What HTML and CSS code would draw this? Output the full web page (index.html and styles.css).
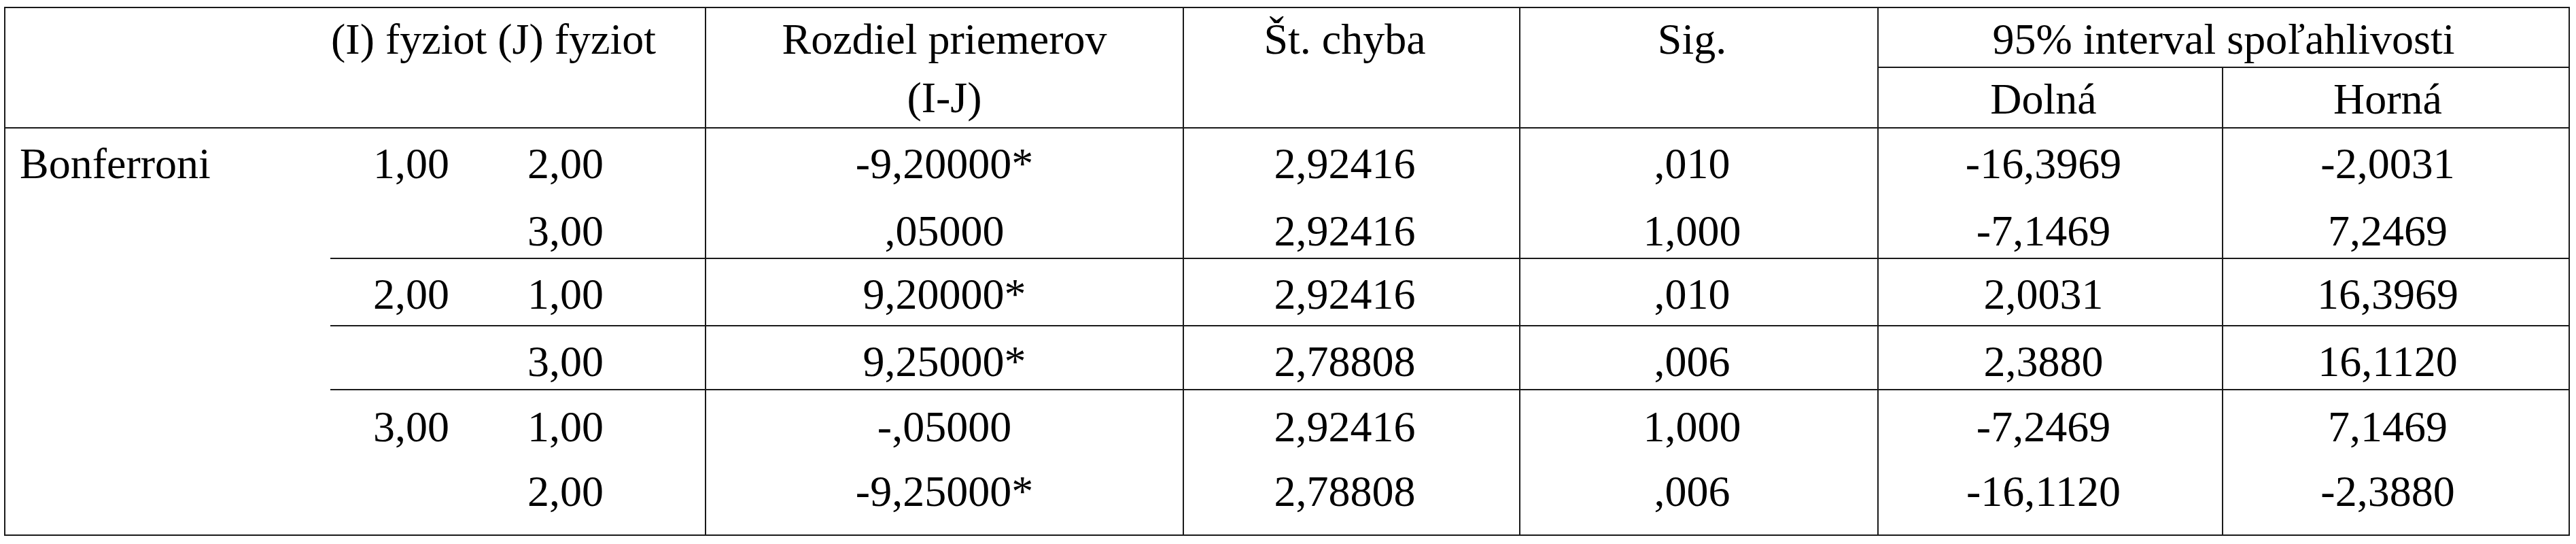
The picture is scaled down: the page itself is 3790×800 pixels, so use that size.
FILE: index.html
```html
<!DOCTYPE html>
<html lang="sk">
<head>
<meta charset="utf-8">
<title>Bonferroni</title>
<link rel="stylesheet" href="styles.css">
</head>
<body>
<table class="stat">
  <colgroup>
    <col class="c-test">
    <col class="c-i">
    <col class="c-j">
    <col class="c-diff">
    <col class="c-se">
    <col class="c-sig">
    <col class="c-lo">
    <col class="c-hi">
  </colgroup>
  <thead>
    <tr class="h1">
      <td class="hd single" rowspan="2"></td>
      <td class="hd single ij" colspan="2" rowspan="2">(I) fyziot (J) fyziot</td>
      <td class="hd double vl" rowspan="2">Rozdiel priemerov<br>(I-J)</td>
      <td class="hd single vl shift" rowspan="2">Št. chyba</td>
      <td class="hd single vl shift" rowspan="2">Sig.</td>
      <td class="hd ci vl" colspan="2">95% interval spoľahlivosti</td>
    </tr>
    <tr class="h2">
      <td class="hd sub vl shift">Dolná</td>
      <td class="hd sub vl shift-hi">Horná</td>
    </tr>
  </thead>
  <tbody>
    <tr class="r1">
      <td class="test" rowspan="6">Bonferroni</td>
      <td class="i">1,00</td>
      <td class="j">2,00</td>
      <td class="num vl">-9,20000*</td>
      <td class="num vl shift">2,92416</td>
      <td class="num vl shift">,010</td>
      <td class="num vl shift">-16,3969</td>
      <td class="num vl shift-hi">-2,0031</td>
    </tr>
    <tr class="r2">
      <td class="i"></td>
      <td class="j">3,00</td>
      <td class="num vl">,05000</td>
      <td class="num vl shift">2,92416</td>
      <td class="num vl shift">1,000</td>
      <td class="num vl shift">-7,1469</td>
      <td class="num vl shift-hi">7,2469</td>
    </tr>
    <tr class="r3 sep">
      <td class="i">2,00</td>
      <td class="j">1,00</td>
      <td class="num vl">9,20000*</td>
      <td class="num vl shift">2,92416</td>
      <td class="num vl shift">,010</td>
      <td class="num vl shift">2,0031</td>
      <td class="num vl shift-hi">16,3969</td>
    </tr>
    <tr class="r4 sep">
      <td class="i"></td>
      <td class="j">3,00</td>
      <td class="num vl">9,25000*</td>
      <td class="num vl shift">2,78808</td>
      <td class="num vl shift">,006</td>
      <td class="num vl shift">2,3880</td>
      <td class="num vl shift-hi">16,1120</td>
    </tr>
    <tr class="r5 sep">
      <td class="i">3,00</td>
      <td class="j">1,00</td>
      <td class="num vl">-,05000</td>
      <td class="num vl shift">2,92416</td>
      <td class="num vl shift">1,000</td>
      <td class="num vl shift">-7,2469</td>
      <td class="num vl shift-hi">7,1469</td>
    </tr>
    <tr class="r6">
      <td class="i"></td>
      <td class="j">2,00</td>
      <td class="num vl">-9,25000*</td>
      <td class="num vl shift">2,78808</td>
      <td class="num vl shift">,006</td>
      <td class="num vl shift">-16,1120</td>
      <td class="num vl shift-hi">-2,3880</td>
    </tr>
  </tbody>
</table>
</body>
</html>
```
FILE: styles.css
```css
html, body {
  margin: 0;
  padding: 0;
  background: #ffffff;
}

body {
  padding: 10px 0 0 6px;
}

.stat {
  border-collapse: collapse;
  table-layout: fixed;
  width: 3775px;
  border: 2px solid #1a1a1a;
  font-family: "Liberation Serif", "Times New Roman", serif;
  font-size: 64px;
  color: #000000;
}

.c-test { width: 479px; }
.c-i    { width: 238px; }
.c-j    { width: 314px; }
.c-diff { width: 703px; }
.c-se   { width: 495px; }
.c-sig  { width: 527px; }
.c-lo   { width: 507px; }
.c-hi   { width: 510px; }

.stat td {
  padding: 0;
  vertical-align: top;
  text-align: center;
  white-space: nowrap;
  overflow: visible;
}

.stat .vl {
  border-left: 2px solid #1a1a1a;
}

.stat .shift { padding-right: 20px; }
.stat .shift-hi { padding-right: 24px; }

/* header */
.stat .hd {
  border-bottom: 2px solid #1a1a1a;
}

.stat .hd.single {
  padding-top: 6px;
  line-height: 80px;
}

.stat .hd.double {
  padding-top: 3px;
  line-height: 86px;
}

.stat .hd.ij {
  text-align: left;
  padding-left: 1px;
}

.stat .hd.ci {
  padding-top: 6px;
  line-height: 80px;
}

.stat .hd.sub {
  padding-top: 6px;
  padding-bottom: 1px;
  line-height: 80px;
}

/* body */
.stat tbody td {
  line-height: 70px;
  padding-top: 17px;
}

.stat tbody td.test {
  text-align: left;
  padding-left: 21px;
  padding-bottom: 0;
}

.stat tbody td.j {
  text-align: left;
  padding-left: 52px;
}

.stat .sep td {
  border-top: 2px solid #1a1a1a;
}

.stat .r1 td { padding-bottom: 12px; }
.stat .r2 td { padding-bottom: 4px; }
.stat .r3 td { padding-bottom: 10px; }
.stat .r4 td { padding-bottom: 5px; }
.stat .r5 td { padding-top: 19px; padding-bottom: 8px; }
.stat .r6 td { padding-bottom: 28px; }

.stat .r1 td.test { padding-bottom: 0; }
```
